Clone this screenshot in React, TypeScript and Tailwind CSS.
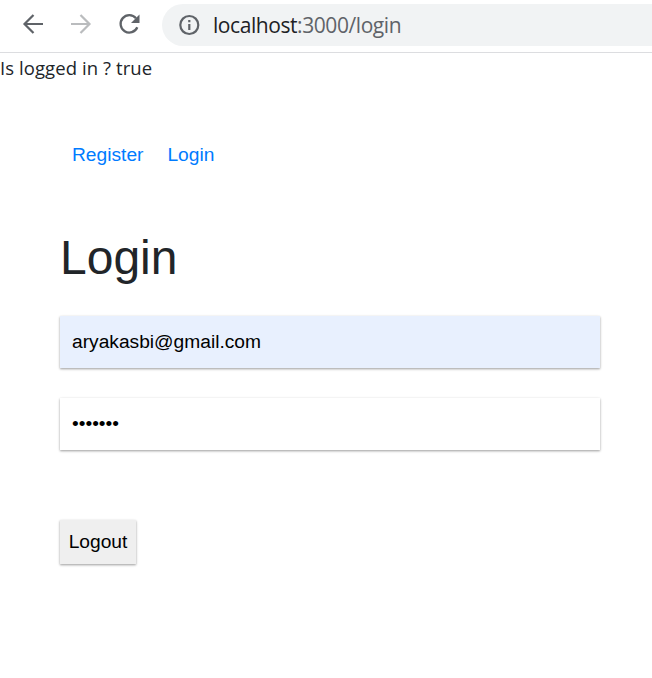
export default function App() {
  return (
    <div className="min-h-screen w-full overflow-hidden bg-white font-['Liberation_Sans',Arial,sans-serif] text-[19.2px] text-black">
      <header className="flex h-[53px] items-start border-b border-[#dcdde0] bg-white font-['Open_Sans',sans-serif]">
        <div className="flex h-[48px] shrink-0 items-center">
          <svg className="ml-[20px] h-[26px] w-[26px]" viewBox="0 0 26 26" fill="none" stroke="#5f6368" strokeWidth="2.2"><path d="M23 13H4.500M13.500 4L4.500 13l9 9" /></svg>
          <svg className="ml-[22px] h-[26px] w-[26px]" viewBox="0 0 26 26" fill="none" stroke="#babcbe" strokeWidth="2.2"><path d="M3 13h18.500M12.500 4l9 9-9 9" /></svg>
          <svg className="ml-[22px] h-[26px] w-[26px]" viewBox="0 0 26 26" fill="none" stroke="#5f6368" strokeWidth="2.3"><path d="M20 7.300A8.700 8.700 0 1 0 21.300 16.300" /><path d="M23.500 3.500v8.500H15z" fill="#5f6368" stroke="none" /></svg>
        </div>
        <div className="ml-[20px] mt-[4px] flex h-[42px] flex-1 items-center rounded-l-full bg-[#f1f3f4] pl-4">
          <svg className="h-[22px] w-[22px]" viewBox="0 0 22 22" fill="none" stroke="#5f6368" strokeWidth="2.2"><circle cx="11.300" cy="11" r="9" /><path d="M11.300 10v6M11.300 6v2.200" /></svg>
          <span className="ml-[13px] whitespace-nowrap pt-[2px] text-[21px] tracking-[-0.43px] text-[#5f6368]"><span className="text-[#202124]">localhost</span>:3000/login</span>
        </div>
      </header>
      <p className="h-[30px] whitespace-nowrap font-['Open_Sans',sans-serif] text-[18.5px] leading-[29px] tracking-[0.08px] text-[#212529]">Is logged in ? true</p>
      <main className="px-[60px]">
        <nav className="flex gap-6 pl-3 pt-[57px] leading-[29px] text-[#007bff]"><a>Register</a><a>Login</a></nav>
        <h1 className="mt-[60px] text-[48px] leading-[58px] text-[#212529]">Login</h1>
        <form className="mt-[29px]">
          <div className="flex h-[52px] w-[540px] items-center bg-[#e8f0fe] px-3 shadow-[0_1px_3px_rgba(0,0,0,0.16),0_1px_2px_rgba(0,0,0,0.26)]">aryakasbi@gmail.com</div>
          <div className="mt-[30px] flex h-[52px] w-[540px] items-center bg-white px-3 shadow-[0_1px_3px_rgba(0,0,0,0.16),0_1px_2px_rgba(0,0,0,0.26)]">•••••••</div>
          <button type="button" className="mt-[70px] flex h-[44px] w-[76px] items-center justify-center bg-[#efefef] shadow-[0_1px_3px_rgba(0,0,0,0.16),0_1px_2px_rgba(0,0,0,0.26)]">Logout</button>
        </form>
      </main>
    </div>
  );
}
